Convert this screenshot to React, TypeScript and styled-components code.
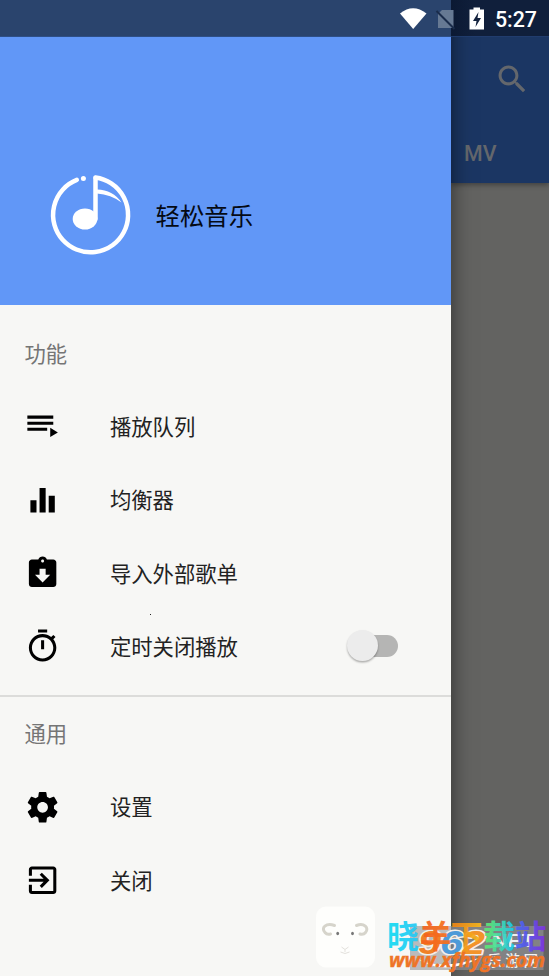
import React from 'react';
import styled, { createGlobalStyle } from 'styled-components';

const Global = createGlobalStyle`
  * { box-sizing: border-box; }
  body { margin: 0; background: #636361; overflow: hidden; font-family: Roboto, "Noto Sans CJK SC", sans-serif; }
`;
const Screen = styled.div`
  position: relative; width: 549px; height: 976px; overflow: hidden; background: #636361;
  display: flex; justify-content: flex-end;
`;
const Page = styled.main`
  width: 98px; height: 976px; display: flex; flex-direction: column;
`;
const AppBar = styled.header`
  height: 183px; padding-top: 37px; background: #1b3663; color: #64676c;
  display: flex; flex-direction: column; box-shadow: 0 2px 5px rgba(0,0,0,.35);
`;
const Toolbar = styled.div`
  height: 85px; display: flex; align-items: center; padding-left: 43px;
`;
const Tab = styled.div`
  padding: 20px 0 0 13px; font: 500 21.35px/24px Roboto, sans-serif;
`;
const Drawer = styled.aside`
  position: absolute; left: 0; top: 0; width: 451px; height: 976px; background: #f7f7f5;
  box-shadow: 0 0 20px rgba(0,0,0,.55);
  display: flex; flex-direction: column;
`;
const DrawerHeader = styled.div`
  height: 305px; background: #6197f7; padding: 124px 0 0 47.5px; flex: none;
  display: flex; align-items: center;
`;
const AppName = styled.h1`
  margin: 0 0 0 24px; font: 400 24.4px/36px "Noto Sans CJK SC", sans-serif; color: #050a14;
`;
const Section = styled.section`
  padding: 12px 0;
  & + & { border-top: 2px solid #dcdcda; padding-top: 0; }
`;
const SectionTitle = styled.h2`
  margin: 0; height: 73px; padding-left: 24.5px; color: #757575;
  font: 400 21.35px/71px "Noto Sans CJK SC", sans-serif;
`;
const Row = styled.div`
  height: 73.3px; padding: 0 50px 0 24.3px; display: flex; align-items: center; color: #222;
`;
const RowLabel = styled.span`
  margin-left: 49px; padding-bottom: 1px; flex: 1; font: 400 21.35px/32px "Noto Sans CJK SC", sans-serif;
`;
const Icon = styled.svg`
  width: 36.6px; height: 36.6px; fill: currentColor; flex: none;
`;
const MenuIcon = styled(Icon)` color: #000; `;
const Switch = styled.div`
  width: 50px; height: 32px; display: flex; align-items: center; padding-left: 12px; margin-right: 3px;
`;
const Track = styled.div`
  width: 39px; height: 22px; border-radius: 11px; background: #b5b5b4; position: relative; margin-bottom: 1px;
`;
const Thumb = styled.div`
  position: absolute; left: -13px; top: -5px; width: 31px; height: 31px; border-radius: 50%;
  background: #ececec; box-shadow: 0 1.5px 2px rgba(0,0,0,.3);
`;
const StatusBar = styled.div`
  position: absolute; left: 0; top: 0; width: 549px; height: 37px; padding: 2px 12px 0 0;
  display: flex; align-items: center; justify-content: flex-end; color: #fff;
  background: linear-gradient(90deg, #2a446d 0 451px, #0b1933 451px, #101f3b 475px);
  border-bottom: 1px solid rgba(50,90,160,.5);
`;
const Clock = styled.span`
  margin-left: 8px; padding-top: 1px; font: 500 21.4px/24px Roboto, sans-serif;
`;
const Speck = styled.i`
  position: absolute; left: 150px; top: 614px; width: 1px; height: 1px; background: #222;
`;
const Watermark = styled.svg`
  position: absolute; left: 300px; top: 896px; width: 249px; height: 80px;
`;
const SiteGlyph = styled.text`
  font: 700 32px "Noto Sans CJK SC", sans-serif;
`;
const SiteUrl = styled.text`
  font: italic 700 19px "Open Sans", sans-serif;
`;
const BadgeDigit = styled.text`
  font: italic 700 34px "Liberation Sans", sans-serif; paint-order: stroke;
`;
const BadgeNet = styled.text`
  font: 700 18px "Liberation Sans", sans-serif;
`;
const BadgeName = styled.text`
  font: 500 14.5px "Noto Sans CJK SC", sans-serif;
`;
const Logo = styled.svg` width: 84px; height: 84px; flex: none; `;
const StatusIcons = styled.svg` width: 90px; height: 30px; flex: none; `;

const paths = {
  queue: 'M19 9H2v2h17V9zm0-4H2v2h17V5zM2 15h13v-2H2v2zm15-2v6l5-3-5-3z',
  equalizer: 'M10 20h4V4h-4v16zm-6 0h4v-8H4v8zM16 9v11h4V9h-4z',
  importList: 'M19 3h-4.18C14.4 1.84 13.3 1 12 1c-1.3 0-2.4.84-2.82 2H5c-1.1 0-2 .9-2 2v14c0 1.1.9 2 2 2h14c1.1 0 2-.9 2-2V5c0-1.1-.9-2-2-2zm-7 0c.55 0 1 .45 1 1s-.45 1-1 1-1-.45-1-1 .45-1 1-1zm0 15l-5-5h3V9h4v4h3l-5 5z',
  timer: 'M15 1H9v2h6V1zm-4 13h2V8h-2v6zm8.03-6.61l1.42-1.42c-.43-.51-.9-.99-1.41-1.41l-1.42 1.42C16.07 4.74 14.12 4 12 4c-4.97 0-9 4.03-9 9s4.02 9 9 9 9-4.03 9-9c0-2.12-.74-4.07-1.97-5.61zM12 20c-3.87 0-7-3.13-7-7s3.13-7 7-7 7 3.13 7 7-3.13 7-7 7z',
  settings: 'M19.43 12.98c.04-.32.07-.64.07-.98s-.03-.66-.07-.98l2.11-1.65c.19-.15.24-.42.12-.64l-2-3.46c-.12-.22-.39-.3-.61-.22l-2.49 1c-.52-.4-1.08-.73-1.69-.98l-.38-2.65C14.46 2.18 14.25 2 14 2h-4c-.25 0-.46.18-.49.42l-.38 2.65c-.61.25-1.17.59-1.69.98l-2.49-1c-.23-.09-.49 0-.61.22l-2 3.46c-.13.22-.07.49.12.64l2.11 1.65c-.04.32-.07.65-.07.98s.03.66.07.98l-2.11 1.65c-.19.15-.24.42-.12.64l2 3.46c.12.22.39.3.61.22l2.49-1c.52.4 1.08.73 1.69.98l.38 2.65c.03.24.24.42.49.42h4c.25 0 .46-.18.49-.42l.38-2.65c.61-.25 1.17-.59 1.69-.98l2.49 1c.23.09.49 0 .61-.22l2-3.46c.12-.22.07-.49-.12-.64l-2.11-1.65zM12 15.5c-1.93 0-3.5-1.57-3.5-3.5s1.57-3.5 3.5-3.5 3.5 1.57 3.5 3.5-1.57 3.5-3.5 3.5z',
  exit: 'M10.09 15.59L11.5 17l5-5-5-5-1.41 1.41L12.67 11H3v2h9.67l-2.58 2.59zM19 3H5c-1.11 0-2 .9-2 2v4h2V5h14v14H5v-4H3v4c0 1.1.89 2 2 2h14c1.1 0 2-.9 2-2V5c0-1.1-.9-2-2-2z',
  search: 'M15.5 14h-.79l-.28-.27C15.41 12.59 16 11.11 16 9.5 16 5.91 13.09 3 9.5 3S3 5.91 3 9.5 5.91 16 9.5 16c1.61 0 3.09-.59 4.23-1.57l.27.28v.79l5 4.99L20.49 19l-4.99-5zm-6 0C7.01 14 5 11.99 5 9.5S7.01 5 9.5 5 14 7.01 14 9.5 11.99 14 9.5 14z',
};

const siteGlyphs = [
  { char: '晓', x: 387, from: '#16d8f2', to: '#25c9f5' },
  { char: '羊', x: 419.5, from: '#f5641e', to: '#f5721e' },
  { char: '下', x: 450.5, from: '#f08a18', to: '#f7b51c' },
  { char: '载', x: 483, from: '#5be57a', to: '#22c9e6' },
  { char: '站', x: 514.5, from: '#4d62ee', to: '#7a35e0' },
];

function MenuRow({ icon, label, children }: { icon: keyof typeof paths; label: string; children?: React.ReactNode }) {
  return (
    <Row>
      <MenuIcon viewBox="-0.2 0 24 24"><path d={paths[icon]} /></MenuIcon>
      <RowLabel>{label}</RowLabel>
      {children}
    </Row>
  );
}

function SiteWatermark() {
  return (
    <Watermark viewBox="300 896 249 80">
      <defs>
        {siteGlyphs.map((g, i) => (
          <linearGradient key={g.char} id={`glyph${i}`}>
            <stop offset="0.2" stopColor={g.from} /><stop offset="0.9" stopColor={g.to} />
          </linearGradient>
        ))}
      </defs>
      <rect x="316" y="906.5" width="59" height="61" rx="10" fill="#fefefc" />
      <g fill="none" stroke="#d6d4cb" strokeWidth="3" strokeLinecap="round">
        <path d="M334.500 925.500C326 922.500 320.500 928 325 932.500Q327 935 330.500 934" />
        <path d="M356.500 925.500C364 922.500 369.500 928 365.500 932.500Q363.500 935 360 934" />
      </g>
      <ellipse cx="337.7" cy="933.5" rx="1.4" ry="1.7" fill="#777" />
      <ellipse cx="352.5" cy="933.5" rx="1.4" ry="1.7" fill="#777" />
      <path d="M341.500 947L345 949.500L348.500 947M345 949.500V952M340.500 952Q345 955 349.500 952" fill="none" stroke="#e3e1dc" />

      <rect x="410" y="926" width="133.500" height="44" fill="#96969a" fillOpacity=".62" />
      <path d="M415 957Q438 972 482 957Q442 978 415 957Z" fill="#fff" />
      <BadgeNet x="492" y="947" textLength="43" lengthAdjust="spacingAndGlyphs" fill="#fff" fillOpacity=".9">NET</BadgeNet>
      <BadgeName x="487" y="966" textLength="51" fill="#f3f3f3">乐游网</BadgeName>
      <g stroke="#f4efe8" strokeWidth="3" strokeLinejoin="round">
        <BadgeDigit x="418" y="953.5" textLength="23" lengthAdjust="spacingAndGlyphs" fill="#ef8128">9</BadgeDigit>
        <BadgeDigit x="440" y="953.5" textLength="23" lengthAdjust="spacingAndGlyphs" fill="#4d9ad8">6</BadgeDigit>
        <BadgeDigit x="462" y="953.5" textLength="23" lengthAdjust="spacingAndGlyphs" fill="#f2942a">2</BadgeDigit>
      </g>
      <g opacity=".93">
        {siteGlyphs.map((g, i) => (
          <SiteGlyph key={g.char} x={g.x} y="948" fill={`url(#glyph${i})`}>{g.char}</SiteGlyph>
        ))}
      </g>
      <SiteUrl x="389" y="966.5" textLength="156" lengthAdjust="spacingAndGlyphs" fill="#ee7427" stroke="#ee7427" strokeWidth=".4">www.xfhygs.com</SiteUrl>
    </Watermark>
  );
}

export default function App() {
  return (
    <Screen>
      <Global />
      <Page>
        <AppBar>
          <Toolbar><Icon viewBox="0 0 24 24"><path d={paths.search} /></Icon></Toolbar>
          <Tab>MV</Tab>
        </AppBar>
      </Page>
      <Drawer>
        <DrawerHeader>
          <Logo viewBox="48 173 84 84" fill="none" stroke="#fff" strokeLinecap="round">
            <path d="M95.5 177.6A37.5 37.5 0 1 1 76.8 179.9" strokeWidth="4.5" />
            <circle cx="83.4" cy="178.5" r="2.5" fill="#fff" stroke="none" />
            <path d="M95.5 178V219" strokeWidth="4.5" />
            <ellipse cx="85" cy="219" rx="12.3" ry="10.5" fill="#fff" stroke="none" />
            <path d="M97 189.5Q113 190 121.5 202.5Q111 194.5 97 193.5Z" fill="#fff" stroke="none" />
          </Logo>
          <AppName>轻松音乐</AppName>
        </DrawerHeader>
        <Section>
          <SectionTitle>功能</SectionTitle>
          <MenuRow icon="queue" label="播放队列" />
          <MenuRow icon="equalizer" label="均衡器" />
          <MenuRow icon="importList" label="导入外部歌单" />
          <MenuRow icon="timer" label="定时关闭播放">
            <Switch><Track><Thumb /></Track></Switch>
          </MenuRow>
        </Section>
        <Section>
          <SectionTitle>通用</SectionTitle>
          <MenuRow icon="settings" label="设置" />
          <MenuRow icon="exit" label="关闭" />
        </Section>
        <Speck />
      </Drawer>
      <StatusBar>
        <StatusIcons viewBox="397 3 90 30">
          <path d="M400 12.5Q413 2 426.500 12.500L413.200 28Z" fill="#fff" />
          <path d="M442 9H453.500V27H438V13Z" fill="#667993" />
          <path d="M436.500 10L454.500 28" stroke="#1a2c4b" strokeWidth="2" />
          <path d="M469.500 8.500H473.500V6.500H480V8.500H484V28.500H469.500Z" fill="#fff" />
          <path d="M478.500 11L473 20H476.500L475.500 26L481 17H477.500Z" fill="#14233f" />
        </StatusIcons>
        <Clock>5:27</Clock>
      </StatusBar>
      <SiteWatermark />
    </Screen>
  );
}
